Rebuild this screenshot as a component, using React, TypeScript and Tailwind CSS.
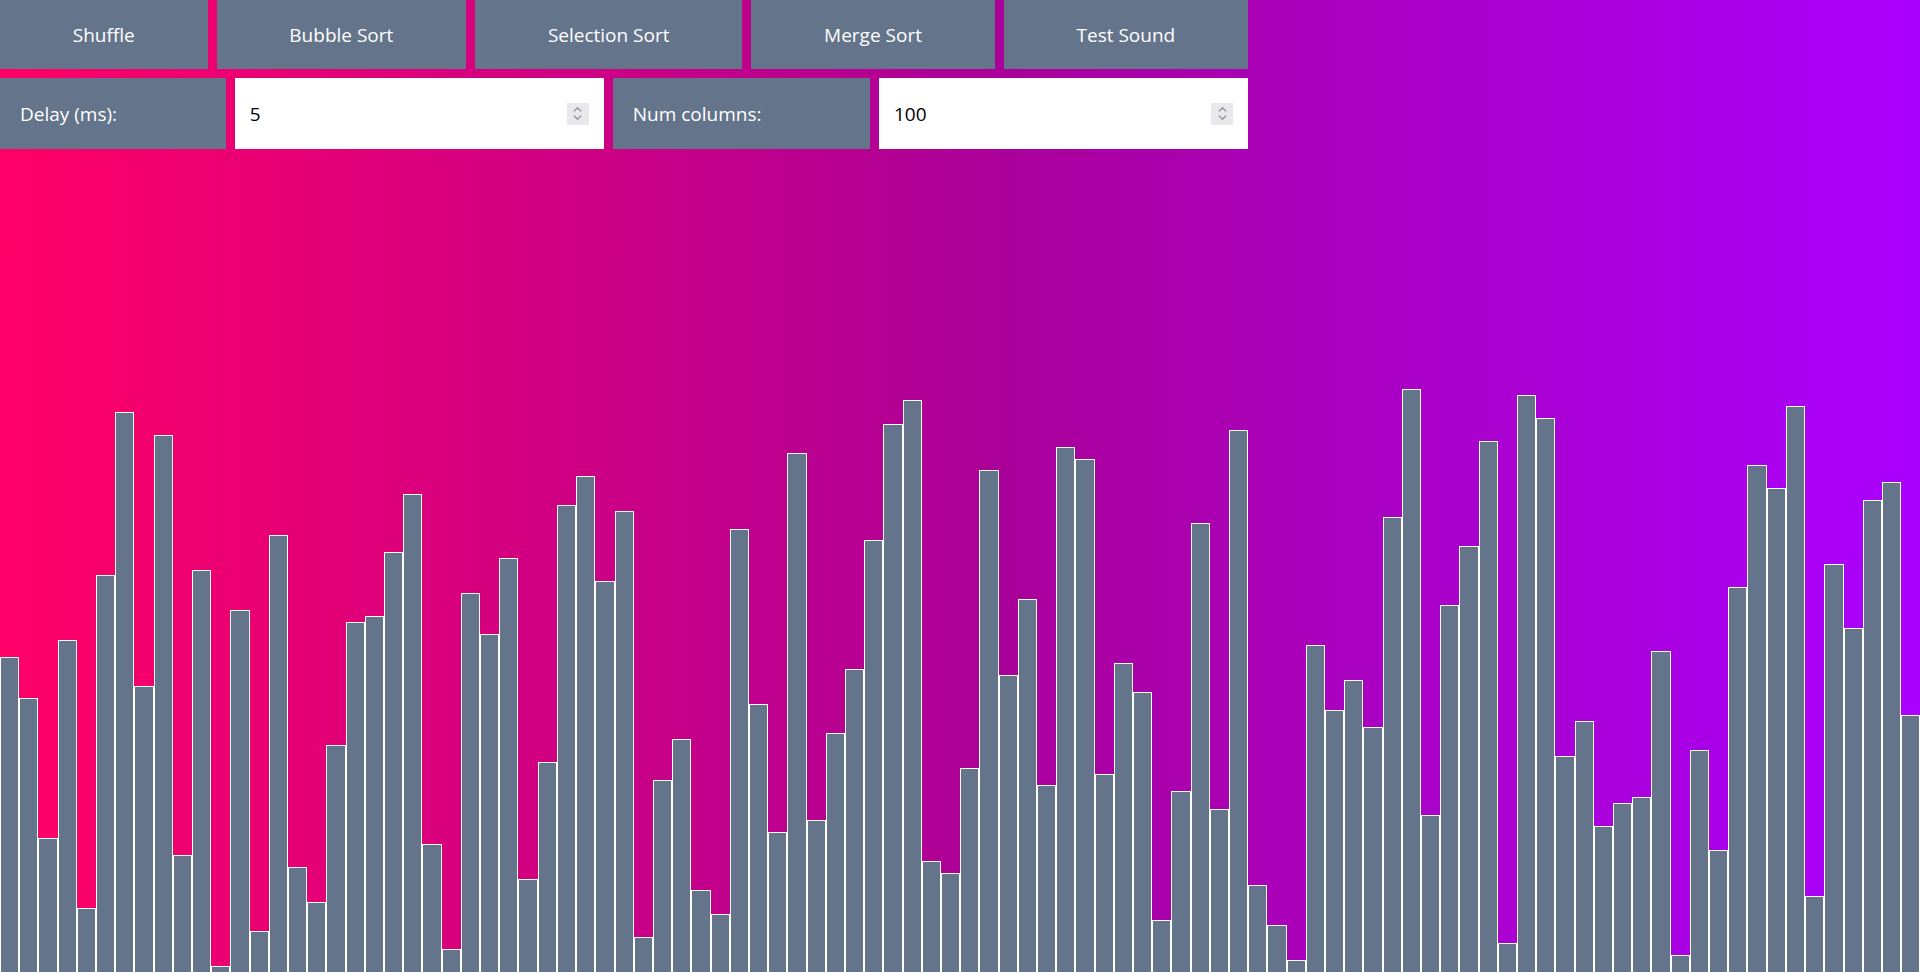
import React, { useState } from 'react';

// column values (1..100), height = value% of 60vh
const VALUES = [
    54, 47, 23, 57, 11, 68, 96, 49, 92, 20,
    69, 1, 62, 7, 75, 18, 12, 39, 60, 61,
    72, 82, 22, 4, 65, 58, 71, 16, 36, 80,
    85, 67, 79, 6, 33, 40, 14, 10, 76, 46,
    24, 89, 26, 41, 52, 74, 94, 98, 19, 17,
    35, 86, 51, 64, 32, 90, 88, 34, 53, 48,
    9, 31, 77, 28, 93, 15, 8, 2, 56, 45,
    50, 42, 78, 100, 27, 63, 73, 91, 5, 99,
    95, 37, 43, 25, 29, 30, 55, 3, 38, 21,
    66, 87, 83, 97, 13, 70, 59, 81, 84, 44,
];

const BUTTONS = ['Shuffle', 'Bubble Sort', 'Selection Sort', 'Merge Sort', 'Test Sound'];

function NumberField({ value, onChange }: { value: string; onChange: (v: string) => void }) {
    return (
        <div className="relative w-[369px] shrink-0 bg-white">
            <input
                type="number"
                value={value}
                onChange={(e) => onChange(e.target.value)}
                className="w-full h-full bg-transparent text-black pl-[15px] pr-12 outline-none [appearance:textfield] [&::-webkit-inner-spin-button]:appearance-none [&::-webkit-outer-spin-button]:appearance-none"
            />
            {/* spinner */}
            <div className="absolute right-[15px] top-1/2 -translate-y-1/2 w-[22px] h-[22px] bg-[#e9e9ed] flex flex-col items-center justify-center gap-[3px] pointer-events-none">
                <svg width="9" height="5" viewBox="0 0 9 5" fill="none" stroke="#85858f" strokeWidth="1.2">
                    <path d="M0.8 4.4 L4.5 0.8 L8.2 4.4" />
                </svg>
                <svg width="9" height="5" viewBox="0 0 9 5" fill="none" stroke="#85858f" strokeWidth="1.2">
                    <path d="M0.8 0.6 L4.5 4.2 L8.2 0.6" />
                </svg>
            </div>
        </div>
    );
}

export default function App() {
    const [delay, setDelay] = useState('5');
    const [cols, setCols] = useState('100');

    return (
        <div className="h-screen flex flex-col overflow-hidden bg-[linear-gradient(to_right,#ff0066,#aa0099_52%,#aa00ff)] font-['Open_Sans','Noto_Sans',sans-serif] text-[19px]">
            {/* Controls */}
            <div className="w-[65vw] flex flex-col gap-[9px]">
                <div className="flex gap-[9px] h-[69px]">
                    {BUTTONS.map((label) => (
                        <button
                            key={label}
                            className="flex-auto bg-[#64748b] text-white px-4 pt-[2px]"
                        >
                            {label}
                        </button>
                    ))}
                </div>
                <div className="flex gap-[9px] h-[71px]">
                    <label className="flex-auto flex items-center bg-[#64748b] text-white px-5 pt-[2px]">Delay (ms):</label>
                    <NumberField value={delay} onChange={setDelay} />
                    <label className="flex-auto flex items-center bg-[#64748b] text-white px-5 pt-[2px]">Num columns:</label>
                    <NumberField value={cols} onChange={setCols} />
                </div>
            </div>

            {/* Columns */}
            <div className="flex-1 flex items-end">
                {VALUES.map((v, i) => (
                    <div
                        key={i}
                        className="flex-1 bg-[#64748b] border border-b-0 border-white"
                        style={{ height: `${v * 0.6}vh` }}
                    />
                ))}
            </div>
        </div>
    );
}
